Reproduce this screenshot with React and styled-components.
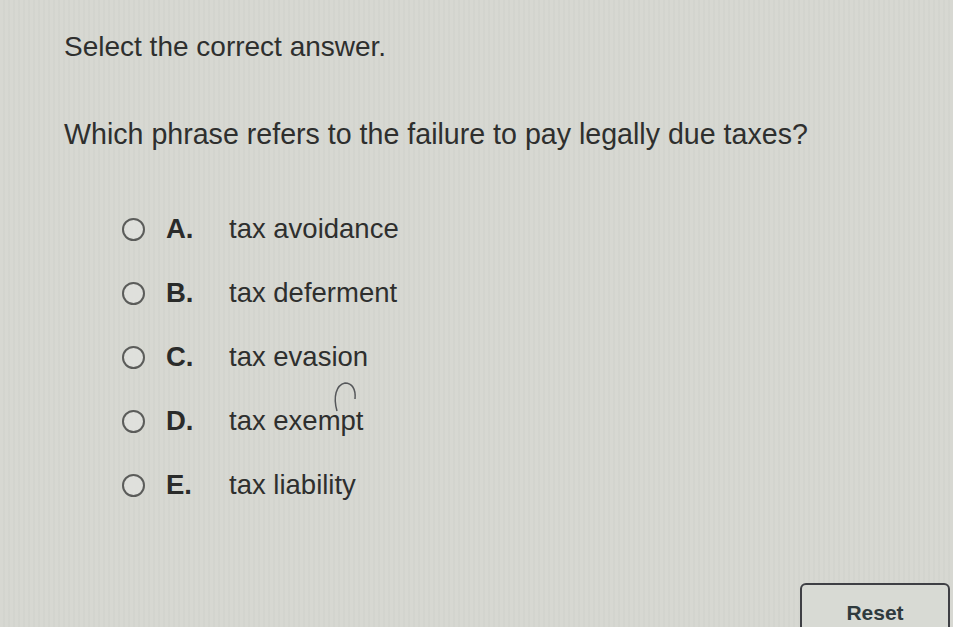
import styled, { createGlobalStyle } from "styled-components";

const Global = createGlobalStyle`
  html, body {
    margin: 0;
    padding: 0;
    background: #d6d8d2;
    overflow: hidden;
  }
  body {
    font-family: "Liberation Sans", Arial, sans-serif;
    color: #2e2f2e;
  }
`

const Page = styled.div`
  position: relative;
  width: 953px;
  height: 627px;
  padding: 31px 0 0 64px;
  box-sizing: border-box;
  background: repeating-linear-gradient(90deg, #d7d8d2 0px, #d7d8d2 3px, #cfd1cb 4px, #d7d8d2 5px);
`

const Title = styled.div`
  font-size: 28px;
  line-height: 32px;
`

const Question = styled.div`
  font-size: 28.6px;
  line-height: 32px;
  margin-top: 55px;
`

const Options = styled.div`
  display: flex;
  flex-direction: column;
  margin-top: 47px;
  padding-left: 58px;
`

const Option = styled.label`
  display: flex;
  align-items: center;
  height: 64px;
  font-size: 27.5px;
`

const Radio = styled.span`
  width: 19px;
  height: 19px;
  border: 2px solid #5b5c5a;
  border-radius: 50%;
  background: #dfe0dc;
  flex-shrink: 0;
`

const Letter = styled.span`
  width: 63px;
  margin-left: 21px;
  font-weight: bold;
  color: #2a2b2a;
`

const Footer = styled.div`
  display: flex;
  justify-content: flex-end;
  margin-top: 66px;
  margin-right: 3px;
`

const ResetButton = styled.button`
  width: 150px;
  height: 60px;
  border: 2px solid #3e3f44;
  border-radius: 6px;
  background: #d8dad4;
  color: #2f3a3d;
  font-family: "Liberation Sans", Arial, sans-serif;
  font-size: 21px;
  font-weight: bold;
  line-height: 22px;
  padding: 17px 0 0;
  display: flex;
  justify-content: center;
  align-items: flex-start;
  box-sizing: border-box;
`

const Cursor = styled.svg`
  position: absolute;
  left: 331px;
  top: 379px;
`

const answers = [
  ["A.", "tax avoidance"],
  ["B.", "tax deferment"],
  ["C.", "tax evasion"],
  ["D.", "tax exempt"],
  ["E.", "tax liability"],
]

const App = () => {
  return (
    <Page>
      <Global />
      <Title>Select the correct answer.</Title>
      <Question>Which phrase refers to the failure to pay legally due taxes?</Question>
      <Options>
        {answers.map(([letter, text]) => (
          <Option key={letter}>
            <Radio />
            <Letter>{letter}</Letter>
            <span>{text}</span>
          </Option>
        ))}
      </Options>
      <Footer>
        <ResetButton>Reset</ResetButton>
      </Footer>
      <Cursor width="28" height="34" viewBox="0 0 28 34">
        <path d="M6 32 C2 18 5 6 14 4 C21 4 25 10 24 20" fill="none" stroke="#55575a" strokeWidth="1.5" />
      </Cursor>
    </Page>
  );
}

export default App;
